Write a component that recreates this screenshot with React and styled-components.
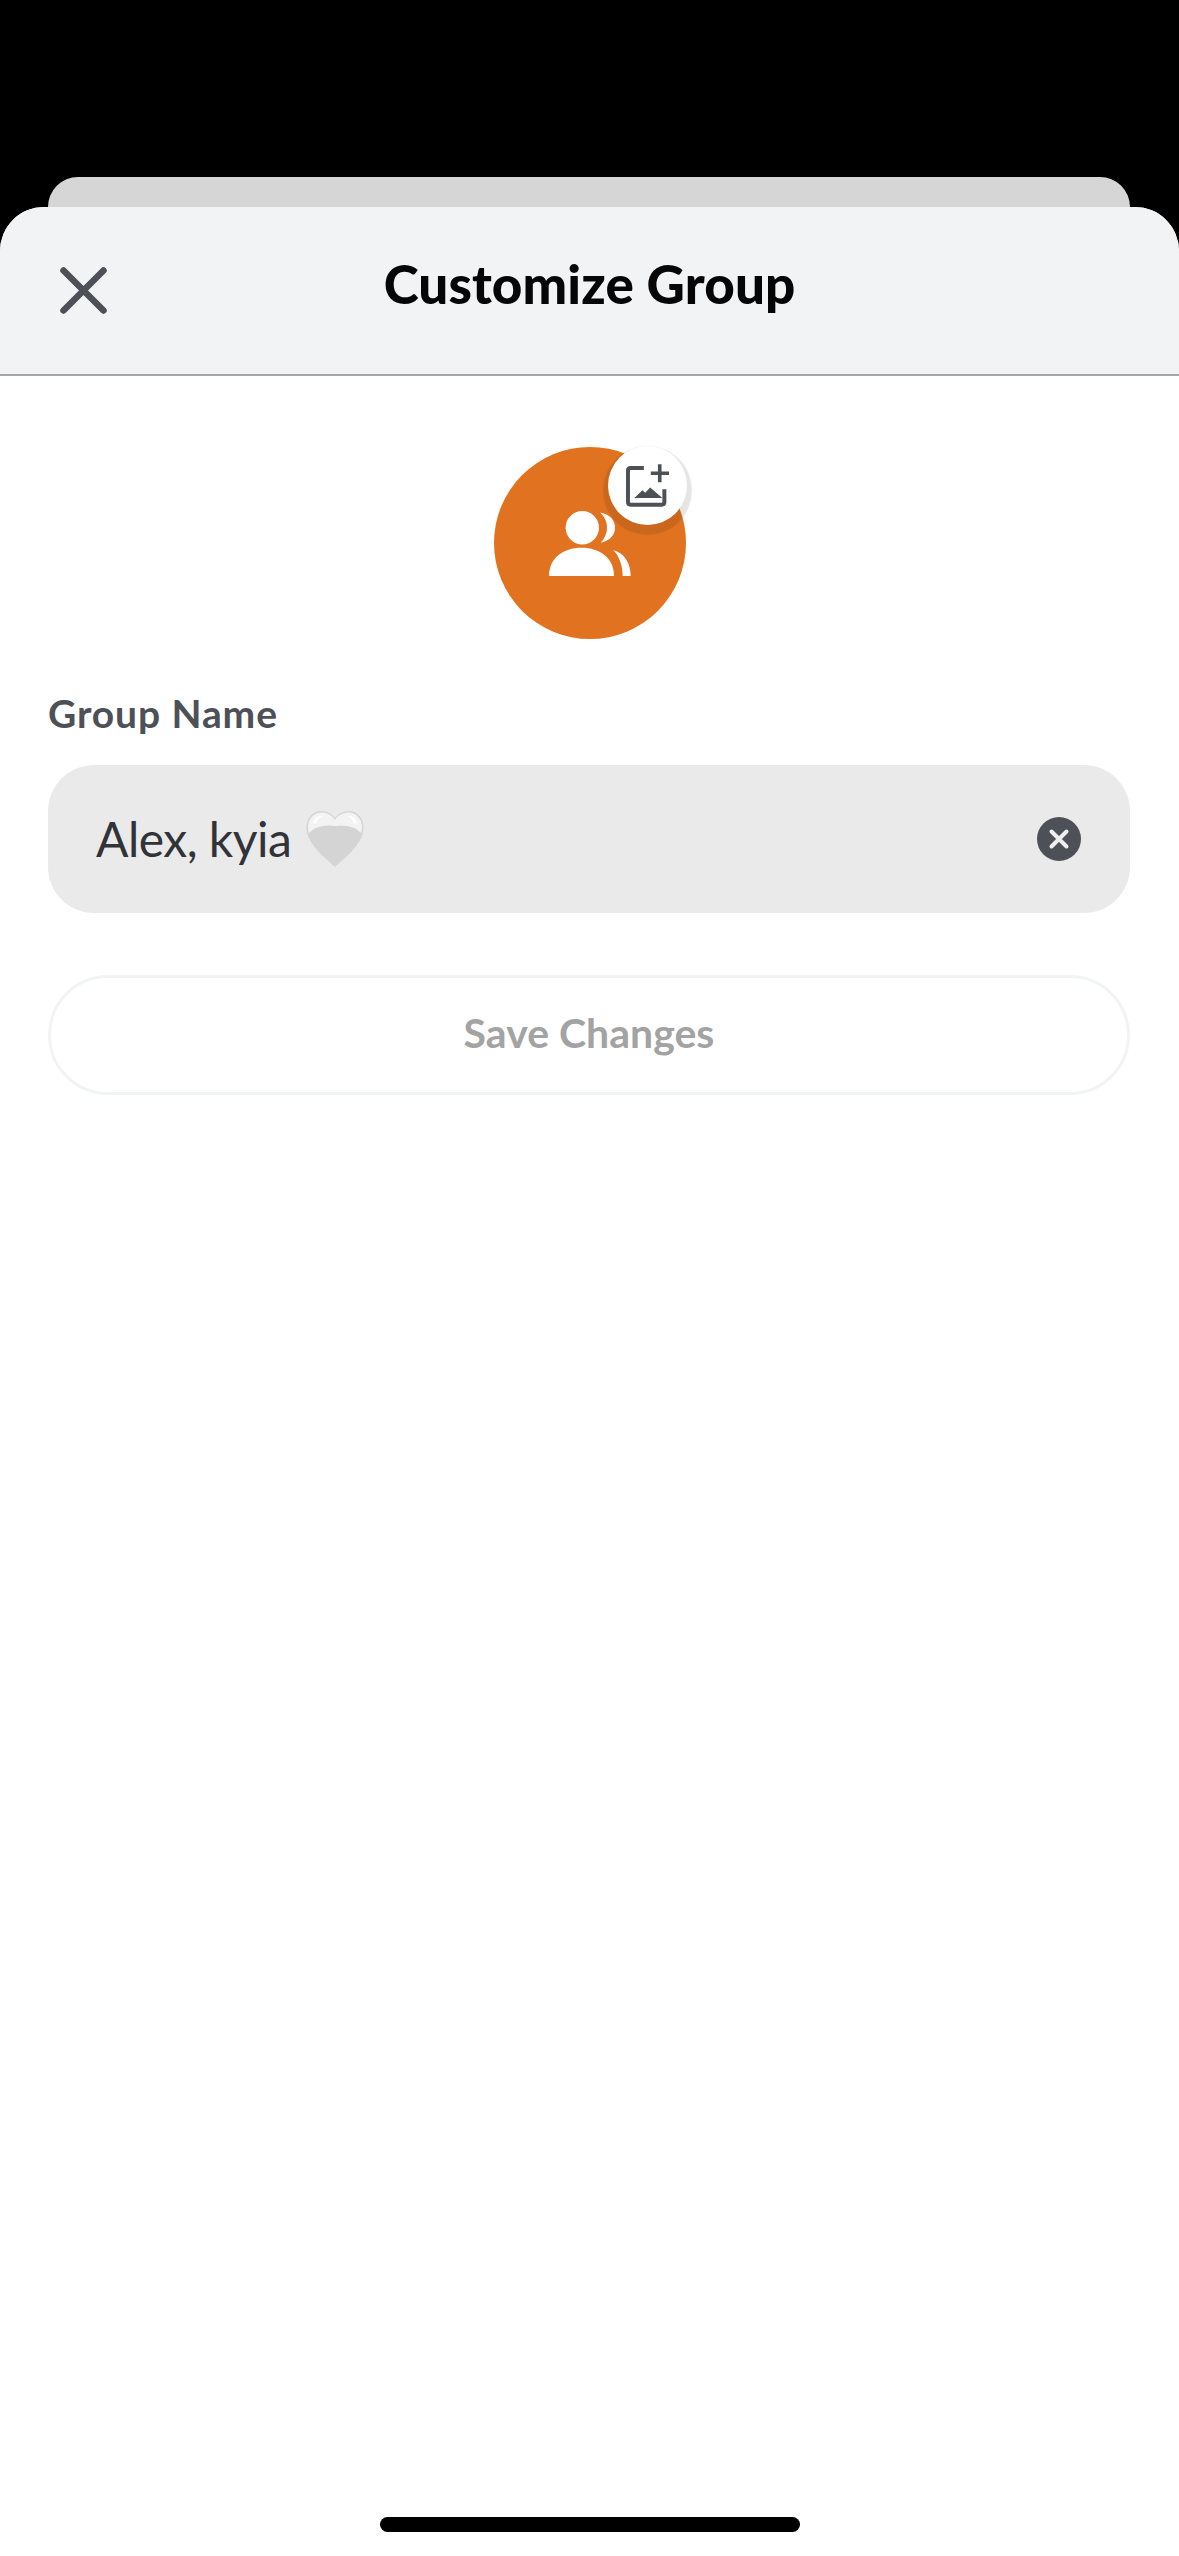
import React from "react";
import styled, { createGlobalStyle } from "styled-components";

const GlobalStyle = createGlobalStyle`
  html, body {
    margin: 0;
    padding: 0;
    background: #000;
  }
  * {
    box-sizing: border-box;
  }
`;

const FONT = `Lato, "Noto Sans", sans-serif`;

const Screen = styled.div`
  width: 1179px;
  height: 2556px;
  padding-top: 177px;
  display: flex;
  flex-direction: column;
  overflow: hidden;
  background: #000;
  font-family: ${FONT};
`;

const BackCard = styled.div`
  height: 30px;
  margin: 0 49px 0 48px;
  flex-shrink: 0;
  background: #d6d6d6;
  border-radius: 32px 32px 0 0;
`;

const Sheet = styled.div`
  flex: 1;
  display: flex;
  flex-direction: column;
  background: #fff;
  border-radius: 44px 44px 0 0;
  overflow: hidden;
`;

const Header = styled.header`
  height: 169px;
  flex-shrink: 0;
  display: grid;
  grid-template-columns: 1fr auto 1fr;
  align-items: center;
  padding: 0 60px 13px;
  background: #f2f3f5;
  border-bottom: 2px solid #a6a6a8;
`;

const CloseButton = styled.button`
  width: 47px;
  height: 47px;
  padding: 0;
  margin-top: 13px;
  border: 0;
  background: none;
  display: flex;
`;

const Title = styled.h1`
  margin: 0;
  font-size: 53px;
  font-weight: 900;
  line-height: 60px;
  letter-spacing: 0.1px;
  color: #060607;
`;

const Body = styled.main`
  flex: 1;
  display: flex;
  flex-direction: column;
  padding: 71px 49px 0 48px;
`;

const Avatar = styled.div`
  position: relative;
  width: 192px;
  height: 192px;
  margin-left: 2px;
  align-self: center;
  display: flex;
  align-items: center;
  justify-content: center;
  border-radius: 50%;
  background: #e17320;
`;

const AvatarBadge = styled.div`
  position: absolute;
  top: -1px;
  right: -1px;
  width: 79px;
  height: 79px;
  display: flex;
  align-items: center;
  justify-content: center;
  border-radius: 50%;
  background: #fff;
  box-shadow: 0 5px 1px 5px rgba(0, 0, 0, 0.1);
`;

const Label = styled.label`
  margin-top: 48px;
  font-size: 39px;
  line-height: 52px;
  font-weight: 700;
  letter-spacing: 0.9px;
  color: #4e5058;
`;

const InputBox = styled.div`
  height: 148px;
  margin-top: 26px;
  padding: 0 48px;
  display: flex;
  align-items: center;
  border-radius: 46px;
  background: #eaeaea;
`;

const InputText = styled.span`
  font-size: 48px;
  line-height: 60px;
  letter-spacing: -0.5px;
  color: #313338;
`;

const Heart = styled.svg`
  width: 58px;
  height: 56px;
  margin-left: 15px;
  flex-shrink: 0;
`;

const ClearButton = styled.button`
  width: 44px;
  height: 44px;
  margin-left: auto;
  margin-right: 1px;
  padding: 0;
  border: 0;
  display: flex;
  align-items: center;
  justify-content: center;
  border-radius: 50%;
  background: #4e5058;
`;

const SaveButton = styled.button`
  height: 120px;
  margin-top: 62px;
  padding: 0 0 6px;
  border: 3px solid #f2f3f5;
  border-radius: 60px;
  background: #fff;
  font-family: ${FONT};
  font-size: 41px;
  font-weight: 700;
  color: #a3a3a3;
`;

const HomeIndicator = styled.div`
  width: 420px;
  height: 15px;
  margin: 0 auto 24px;
  flex-shrink: 0;
  border-radius: 8px;
  background: #000;
`;

const CloseIcon = () => (
  <svg width="47" height="47" viewBox="0 0 47 47" fill="none">
    <path d="M3.500 3.500L43.500 43.500M43.500 3.500L3.500 43.500" stroke="#4e5058" strokeWidth="6.5" strokeLinecap="round" />
  </svg>
);

const GroupIcon = () => (
  <svg width="82" height="65" viewBox="0 0 82 65" fill="#fff">
    <circle cx="33.3" cy="16.7" r="16.7" />
    <path d="M0 65C0 47 14 36.7 32.5 36.7S65 47 65 65Z" />
    <path d="M51 1.5C62 3.5 66 10 66 16.7C66 23 62 29.5 51.7 31.7C56 27 58 22 58 16.7C58 11 56 6 51 1.5Z" />
    <path d="M64.3 39C75 42 81.7 52 81.7 65H73.7C73.7 54 70 45 64.3 39Z" />
  </svg>
);

const ImagePlusIcon = () => (
  <svg width="43" height="43" viewBox="0 0 130 128" fill="none">
    <path
      d="M54 11H14Q6 11 6 19V114Q6 122 14 122H108Q116 122 116 114V75"
      stroke="#4e5058"
      strokeWidth="12"
    />
    <path d="M25 102L50 78L58 86L73 70L110 102Z" fill="#4e5058" />
    <path d="M75 27H130M102 0V54" stroke="#4e5058" strokeWidth="11" />
  </svg>
);

const ClearIcon = () => (
  <svg width="22" height="22" viewBox="0 0 22 22" fill="none">
    <path d="M3.500 3.500L18.500 18.500M18.500 3.500L3.500 18.500" stroke="#eee" strokeWidth="4" strokeLinecap="round" />
  </svg>
);

const HeartEmoji = () => (
  <Heart viewBox="0 0 58 56">
    <path
      d="M29 56C20 47 1 34 .5 17C.2 7 7 0 15 0C21 0 26 3 29 7C32 3 37 0 43 0C51 0 57.800 7 57.500 17C57 34 38 47 29 56Z"
      fill="#d4d4d4"
    />
    <path
      d="M29 9C32 4 37 1.500 43 1.500C50 1.500 56 8 56 16C56 18 55.600 20 55 22C50 16 39 13 29 15C19 13 8 16 3 22C2.400 20 2 18 2 16C2 8 8 1.500 15 1.500C21 1.500 26 4 29 9Z"
      fill="#f3f3f3"
    />
    <path d="M7 12C8 7 12 4.500 17 5C14 6 11 8 10 13Z" fill="#fff" />
    <path d="M41 5C46 4.500 50 7 51 12L48 13C47 8 44 6 41 5Z" fill="#fff" />
  </Heart>
);

export default function App() {
  return (
    <>
      <GlobalStyle />
      <Screen>
        <BackCard />
        <Sheet>
          <Header>
            <CloseButton>
              <CloseIcon />
            </CloseButton>
            <Title>Customize Group</Title>
          </Header>
          <Body>
            <Avatar>
              <GroupIcon />
              <AvatarBadge>
                <ImagePlusIcon />
              </AvatarBadge>
            </Avatar>
            <Label>Group Name</Label>
            <InputBox>
              <InputText>Alex, kyia</InputText>
              <HeartEmoji />
              <ClearButton>
                <ClearIcon />
              </ClearButton>
            </InputBox>
            <SaveButton>Save Changes</SaveButton>
          </Body>
          <HomeIndicator />
        </Sheet>
      </Screen>
    </>
  );
}
